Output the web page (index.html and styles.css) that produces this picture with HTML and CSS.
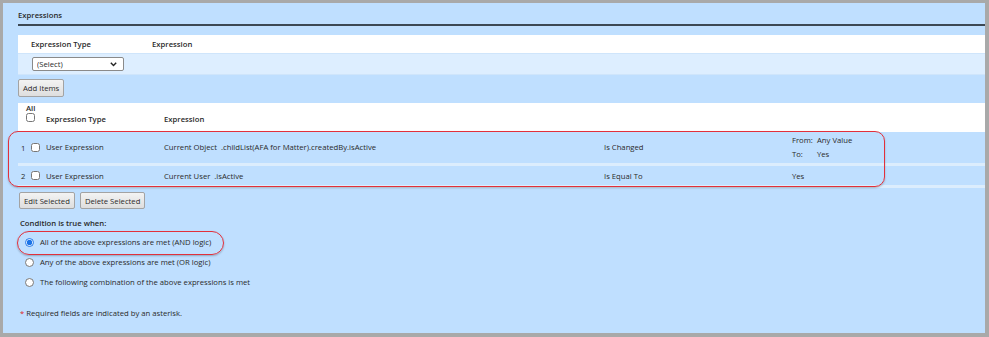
FILE: index.html
```html
<!DOCTYPE html>
<html lang="en">
<head>
  <meta charset="UTF-8" />
  <title>Expressions</title>
  <link rel="stylesheet" href="styles.css">
</head>
<body>
<div class="panel">
  <h2 class="title">Expressions</h2>

  <table class="new-expr">
    <tr class="head">
      <th class="c-type">Expression Type</th>
      <th>Expression</th>
    </tr>
    <tr class="pick">
      <td class="c-type">
        <span class="select-wrap">
          <select>
            <option>(Select)</option>
          </select>
          <svg class="chev" width="7" height="5" viewBox="0 0 7 5"><path d="M0.8 0.8 L3.5 3.5 L6.2 0.8" fill="none" stroke="#222" stroke-width="1.4"/></svg>
        </span>
      </td>
      <td></td>
    </tr>
  </table>

  <button class="btn add-btn">Add Items</button>

  <table class="expr-list">
    <colgroup>
      <col style="width: 26px">
      <col style="width: 118px">
      <col style="width: 440px">
      <col style="width: 188px">
      <col>
    </colgroup>
    <tr class="head">
      <th class="c-all">All<input type="checkbox"></th>
      <th>Expression Type</th>
      <th>Expression</th>
      <th></th>
      <th></th>
    </tr>
    <tr class="row tall">
      <td class="c-num"><span class="num">1</span><input type="checkbox"></td>
      <td>User Expression</td>
      <td>Current Object&nbsp; .childList(AFA for Matter).createdBy.isActive</td>
      <td>Is Changed</td>
      <td>
        <div class="fromto"><span class="lbl">From:</span>Any Value</div>
        <div class="fromto"><span class="lbl">To:</span>Yes</div>
      </td>
    </tr>
    <tr class="row">
      <td class="c-num"><span class="num">2</span><input type="checkbox"></td>
      <td>User Expression</td>
      <td>Current User&nbsp; .isActive</td>
      <td>Is Equal To</td>
      <td>Yes</td>
    </tr>
  </table>

  <div class="actions">
    <button class="btn">Edit Selected</button>
    <button class="btn">Delete Selected</button>
  </div>

  <div class="cond-label">Condition is true when:</div>
  <div class="radios">
    <label class="radio"><input type="radio" name="logic" checked> All of the above expressions are met (AND logic)</label>
    <label class="radio"><input type="radio" name="logic"> Any of the above expressions are met (OR logic)</label>
    <label class="radio"><input type="radio" name="logic"> The following combination of the above expressions is met</label>
  </div>

  <p class="required"><span class="star">*</span> Required fields are indicated by an asterisk.</p>

  <!-- annotation marks -->
  <div class="mark mark-rows"></div>
  <div class="mark mark-radio"></div>
</div>
</body>
</html>
```

FILE: styles.css
```css
body {
  margin: 0;
  background-color: #a9a9a9;
  font-family: "Open Sans", "DejaVu Sans", sans-serif;
  font-size: 7.7px;
  color: #2a2a2a;
}
.panel {
  position: relative;
  margin: 3px 4px 0 3px;
  height: 330px;
  background-color: #bfdfff;
  padding-left: 15px;
  overflow: hidden;
}
.title {
  margin: 0;
  padding: 6px 0 3px;
  font-size: 7.7px;
  line-height: 12px;
  font-weight: 600;
  border-bottom: 2px solid #3c4854;
}
table {
  border-collapse: collapse;
  width: 100%;
}
th {
  text-align: left;
  font-weight: 600;
  padding: 0;
}
td {
  padding: 0;
}

/* new expression picker */
.new-expr {
  margin-top: 9px;
}
.new-expr .head {
  background: white;
  height: 18px;
}
.new-expr .c-type {
  width: 121px;
  padding-left: 13px;
}
.new-expr .pick {
  background: #ddeeff;
  height: 21px;
  border-top: 1px solid #cfe5fb;
  border-bottom: 1px solid #cfe5fb;
}
.select-wrap {
  position: relative;
  display: inline-block;
  margin-left: 1px;
}
select {
  appearance: none;
  width: 92px;
  height: 14px;
  padding: 0 0 0 4px;
  border: 1px solid #8a8a8a;
  border-radius: 2px;
  background: white;
  font-family: inherit;
  font-size: 7.7px;
  color: #2a2a2a;
  vertical-align: middle;
}
.chev {
  position: absolute;
  right: 7px;
  top: 5px;
}

.btn {
  font-family: inherit;
  font-size: 7.7px;
  color: #2a2a2a;
  height: 18px;
  padding: 0 4px;
  border: 1px solid #a3a3a3;
  border-radius: 2px;
  background: linear-gradient(#f3f3f3, #dedede);
  white-space: nowrap;
}
.add-btn {
  display: block;
  margin-top: 4px;
}

/* expression list */
.expr-list {
  margin-top: 6px;
}
.expr-list .head {
  background: white;
  height: 29px;
}
.expr-list .head th {
  vertical-align: middle;
  padding-top: 3px;
}
.expr-list .head th.c-all {
  padding-left: 8px;
  line-height: 9px;
  vertical-align: top;
  padding-top: 1px;
}
.c-all input {
  display: block;
  margin: 7px 0 0 1px;
}
.expr-list th,
.expr-list td {
  padding-left: 2px;
}
.expr-list .row {
  height: 22px;
  border-bottom: 3px solid #dcedfd;
}
.expr-list .row.tall {
  height: 33px;
}
.expr-list td.c-num {
  padding-left: 3px;
  white-space: nowrap;
}
.num {
  display: inline-block;
  width: 10px;
  vertical-align: middle;
}
input[type="checkbox"] {
  width: 9px;
  height: 9px;
  margin: 0;
  vertical-align: middle;
}
.fromto {
  line-height: 14px;
}
.lbl {
  display: inline-block;
  width: 25px;
}

.actions {
  margin-top: 4px;
  display: flex;
  gap: 5px;
  padding-left: 1px;
}
.actions .btn {
  height: 17px;
}

.cond-label {
  margin-top: 6px;
  padding-left: 2px;
  line-height: 16px;
  font-weight: 600;
}
.radios {
  margin-top: 1px;
}
.radio {
  display: flex;
  align-items: center;
  height: 20px;
  gap: 6px;
  padding-left: 7px;
}
input[type="radio"] {
  width: 9px;
  height: 9px;
  margin: 0;
  accent-color: #1a73e8;
}
.required {
  margin: 14px 0 0 2px;
  line-height: 14px;
}
.star {
  color: #e02020;
}

/* red annotation outlines */
.mark {
  position: absolute;
  border: 1.5px solid #e2303b;
  box-shadow: 0 1px 2px rgba(0, 0, 0, 0.25);
}
.mark-rows {
  left: 5px;
  top: 128px;
  width: 875px;
  height: 54px;
  border-radius: 10px;
}
.mark-radio {
  left: 14px;
  top: 228px;
  width: 205px;
  height: 22px;
  border-radius: 12px;
}
```
